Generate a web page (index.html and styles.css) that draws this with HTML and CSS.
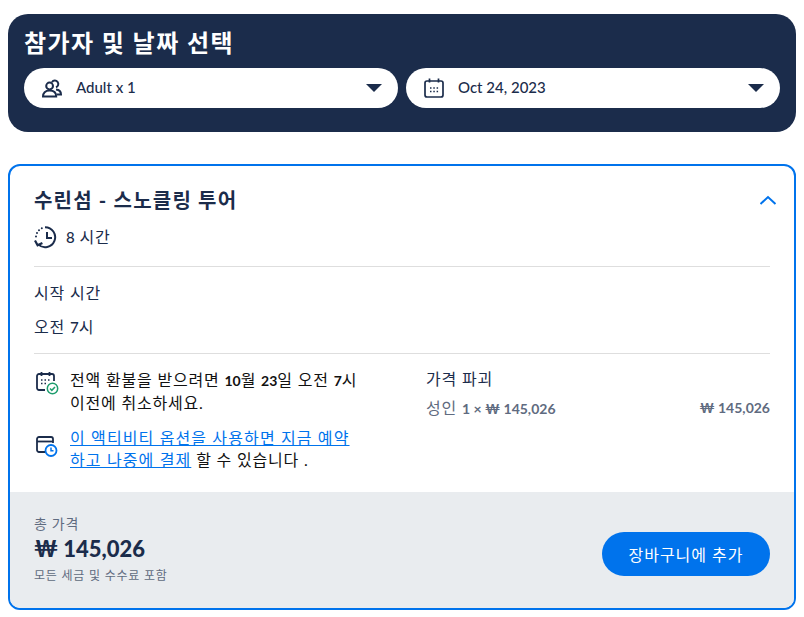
FILE: index.html
```html
<!DOCTYPE html>
<html lang="ko">
<head>
    <meta charset="UTF-8">
    <meta name="viewport" content="width=device-width, initial-scale=1.0">
    <title>참가자 및 날짜 선택</title>
    <link rel="stylesheet" href="styles.css">
</head>
<body>

    <!-- Participants and date -->
    <div class="picker">
        <div class="picker-title">참가자 및 날짜 선택</div>
        <div class="picker-row">
            <div class="select-pill">
                <svg class="select-icon" width="20" height="20" viewBox="0 0 20 20" fill="none" stroke="#1b2c4b" stroke-width="2">
                    <circle cx="7.6" cy="8" r="3.4"/>
                    <path d="M1 18.600c0-3.800 2.200-6 6.600-6s6.600 2.200 6.600 6z"/>
                    <path d="M10 4.200a3.400 3.400 0 1 1 4 5"/>
                    <path d="M14 11.400c3 .3 5 2.200 5 5h-4.500"/>
                </svg>
                <span class="select-text">Adult x 1</span>
                <span class="select-arrow"></span>
            </div>
            <div class="select-pill">
                <svg class="select-icon" width="20" height="20" viewBox="0 0 20 20" fill="none" stroke="#1b2c4b" stroke-width="1.700">
                    <rect x="1" y="3" width="18" height="16" rx="2"/>
                    <path d="M5.500 .5v4M14.500 .5v4"/>
                    <path d="M6 10h1.500M9.300 10h1.500M12.600 10h1.500M6 13.500h1.500M9.300 13.500h1.500M12.600 13.500h1.500" stroke-width="1.500"/>
                </svg>
                <span class="select-text">Oct 24, 2023</span>
                <span class="select-arrow"></span>
            </div>
        </div>
    </div>

    <!-- Activity option -->
    <div class="option-card">
        <div class="option-body">
            <div class="option-header">
                <div class="option-title">수린섬 - 스노클링 투어</div>
                <svg class="chevron" width="18" height="10" viewBox="0 0 18 10" fill="none" stroke="#0073ec" stroke-width="2">
                    <path d="M1.500 9l7.500-7 7.500 7"/>
                </svg>
            </div>
            <div class="duration">
                <svg width="24" height="24" viewBox="0 0 24 24" fill="none" stroke="#1b2c4b" stroke-width="2">
                    <path d="M11 2.200a10 10 0 1 1-6.800 17.200"/>
                    <path d="M13 7v6h5"/>
                    <path d="M1 15.500l2.600 4.800 4.800-2.400" stroke-width="2.200"/>
                    <path d="M2 11.500v.01M3 8v.01M5 5.300v.01M7.800 3.200v.01" stroke-linecap="round"/>
                </svg>
                <span><span class="num">8</span> 시간</span>
            </div>
            <div class="divider"></div>
            <div class="start-label">시작 시간</div>
            <div class="start-value">오전 <span class="num">7</span>시</div>
            <div class="divider"></div>

            <div class="details">
                <div class="notes">
                    <div class="note">
                        <svg class="note-icon" width="24" height="24" viewBox="0 0 24 24" fill="none">
                            <path d="M10 19H4a2 2 0 0 1-2-2V5a2 2 0 0 1 2-2h13a2 2 0 0 1 2 2v5" stroke="#1b2c4b" stroke-width="1.800"/>
                            <path d="M6.500 1v4M14.500 1v4" stroke="#1b2c4b" stroke-width="1.800"/>
                            <path d="M6 9h1.500M9.500 9H11M13 9h1.500M6 12.500h1.500M9.500 12.500H11" stroke="#1b2c4b" stroke-width="1.500"/>
                            <circle cx="17.500" cy="17.500" r="5.200" fill="#fff" stroke="#1f9d6e" stroke-width="1.500"/>
                            <path d="M15 17.500l1.800 1.800 3.200-3.400" stroke="#1f9d6e" stroke-width="1.500"/>
                        </svg>
                        <p class="note-text">전액 환불을 받으려면 <span class="num">10</span>월 <span class="num">23</span>일 오전 <span class="num">7</span>시<br>이전에 취소하세요.</p>
                    </div>
                    <div class="note">
                        <svg class="note-icon note-icon-pay" width="24" height="24" viewBox="0 0 24 24" fill="none">
                            <path d="M10 18H4a2 2 0 0 1-2-2V5a2 2 0 0 1 2-2h12a2 2 0 0 1 2 2v4" stroke="#1b2c4b" stroke-width="1.800"/>
                            <path d="M2 7.500h16" stroke="#1b2c4b" stroke-width="1.800"/>
                            <circle cx="16" cy="16.500" r="5.500" fill="#fff" stroke="#0073ec" stroke-width="1.800"/>
                            <path d="M16 13.500v3.300h2.500" stroke="#0073ec" stroke-width="1.500"/>
                        </svg>
                        <p class="note-text"><a class="note-link" href="#">이 액티비티 옵션을 사용하면 지금 예약<br>하고 나중에 결제</a> 할 수 있습니다 .</p>
                    </div>
                </div>
                <div class="breakdown">
                    <div class="breakdown-title">가격 파괴</div>
                    <div class="breakdown-row">
                        <span>성인 <span class="num">1 × ₩ 145,026</span></span>
                        <span class="num">₩ 145,026</span>
                    </div>
                </div>
            </div>
        </div>

        <div class="option-footer">
            <div>
                <div class="total-label">총 가격</div>
                <div class="total-price">₩ 145,026</div>
                <div class="total-note">모든 세금 및 수수료 포함</div>
            </div>
            <button class="cart-button">장바구니에 추가</button>
        </div>
    </div>

</body>
</html>
```

FILE: styles.css
```css
body {
    font-family: Lato, "Noto Sans CJK KR", sans-serif;
    margin: 0;
    padding: 14px 8px 7px;
    background-color: #fff;
    color: #1b2c4b;
}

/* Digits sit tighter than the hangul around them */
.num {
    letter-spacing: 0;
    font-size: 15px;
    font-weight: 500;
}

/* Top picker */
.picker {
    background-color: #1b2c4b;
    border-radius: 20px;
    padding: 13px 16px 24px;
    margin-bottom: 32px;
}

.picker-title {
    color: #fff;
    font-size: 24px;
    font-weight: bold;
    line-height: 32px;
    letter-spacing: 0.06em;
    margin-bottom: 9px;
}

.picker-row {
    display: flex;
    gap: 8px;
}

.select-pill {
    flex: 1;
    height: 40px;
    background-color: #fff;
    border-radius: 20px;
    display: flex;
    align-items: center;
    padding: 0 16px 0 18px;
}

.select-icon {
    margin-right: 14px;
}

.select-text {
    flex: 1;
    font-size: 15px;
    font-weight: 500;
    padding-bottom: 3px;
}

.select-arrow {
    width: 0;
    height: 0;
    border-left: 8px solid transparent;
    border-right: 8px solid transparent;
    border-top: 8px solid #1b2c4b;
}

/* Option card */
.option-card {
    border: 2px solid #0073ec;
    border-radius: 12px;
    overflow: hidden;
}

.option-body {
    padding: 0 24px;
}

.option-header {
    display: flex;
    justify-content: space-between;
    align-items: center;
    padding-top: 20px;
    height: 28px;
}

.option-title {
    font-size: 20px;
    font-weight: bold;
    line-height: 28px;
    letter-spacing: 0.06em;
}

.chevron {
    margin-right: -7px;
}

.duration {
    display: flex;
    align-items: center;
    gap: 8px;
    margin-top: 8px;
    font-size: 16px;
    line-height: 24px;
    height: 30px;
    letter-spacing: 0.05em;
}

.divider {
    height: 1px;
    background-color: #dedede;
}

.duration + .divider {
    margin-top: 14px;
}

.start-label {
    font-size: 16px;
    line-height: 24px;
    letter-spacing: 0.05em;
    margin-top: 14px;
}

.start-value {
    font-size: 16px;
    line-height: 24px;
    letter-spacing: 0.05em;
    margin-top: 10px;
    margin-bottom: 14px;
}

.details {
    display: flex;
    padding-top: 13px;
    box-sizing: border-box;
    height: 138px;
}

.notes {
    width: 392px;
    flex-shrink: 0;
    padding-top: 2px;
}

.note {
    display: flex;
    gap: 10px;
    margin-bottom: 13px;
}

.note-icon {
    flex-shrink: 0;
    margin-top: 2px;
    width: 26px;
}

.note-icon-pay {
    margin-top: 7px;
}

.note-text {
    margin: 0;
    font-size: 16px;
    line-height: 22px;
    letter-spacing: 0.05em;
    color: #111;
}

.note-text .num {
    font-size: 14px;
    font-weight: bold;
}

.note-link {
    color: #0073ec;
    letter-spacing: 0.07em;
}

.breakdown {
    flex: 1;
}

.breakdown-title {
    font-size: 16px;
    line-height: 24px;
    letter-spacing: 0.05em;
}

.breakdown-row {
    display: flex;
    justify-content: space-between;
    margin-top: 5px;
    font-size: 16px;
    line-height: 24px;
    letter-spacing: 0.05em;
    color: #5f6b80;
}

.breakdown-row .num {
    font-size: 14px;
    font-weight: bold;
}

/* Footer */
.option-footer {
    background-color: #e9ecef;
    display: flex;
    justify-content: space-between;
    align-items: center;
    padding: 20px 24px;
    height: 76px;
}

.total-label {
    font-size: 14px;
    line-height: 20px;
    letter-spacing: 0.05em;
    color: #5f6b80;
}

.total-price {
    font-size: 22px;
    font-weight: 900;
    line-height: 30px;
}

.total-note {
    font-size: 12px;
    line-height: 20px;
    letter-spacing: 0.065em;
    margin-top: 2px;
    color: #5f6b80;
}

.cart-button {
    width: 168px;
    height: 44px;
    margin-top: 8px;
    background-color: #0073ec;
    color: #fff;
    border: none;
    border-radius: 22px;
    font-family: inherit;
    font-size: 16px;
    letter-spacing: 0.06em;
    cursor: pointer;
}
```
